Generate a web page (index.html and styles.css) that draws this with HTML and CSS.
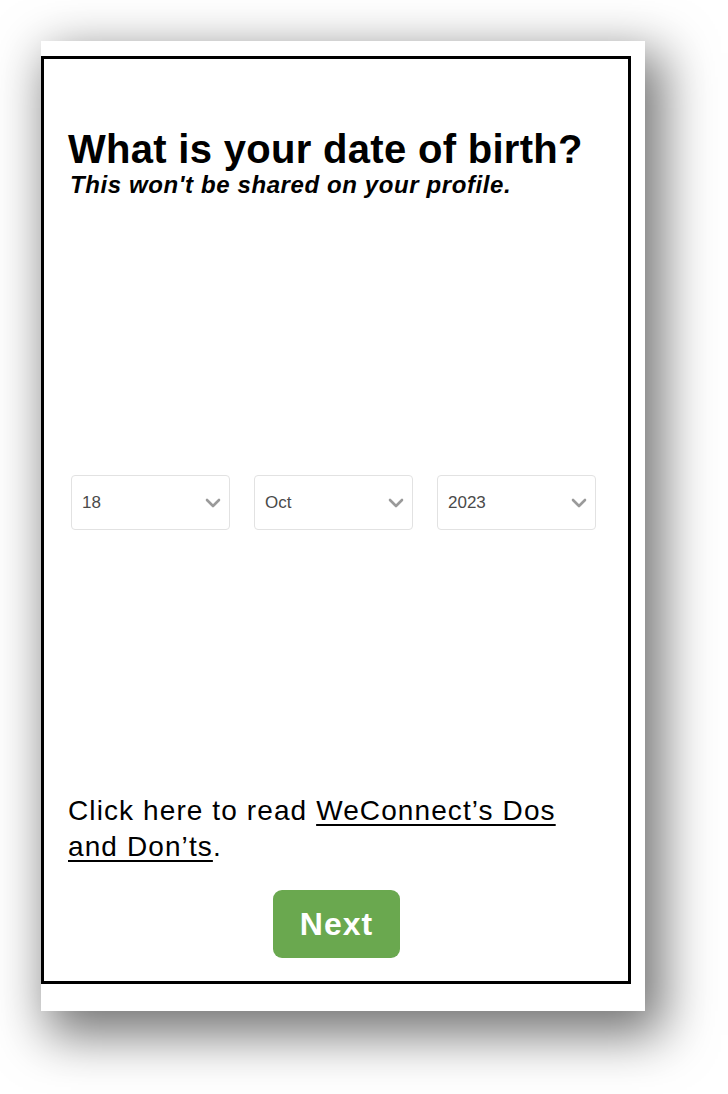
FILE: index.html
```html
<!DOCTYPE html>
<html lang="en">
<head>
<meta charset="utf-8">
<title>Date of birth</title>
<link rel="stylesheet" href="styles.css">
</head>
<body>
<div class="sheet">
  <div class="frame">
    <h1 class="title">What is your date of birth?</h1>
    <p class="subtitle">This won't be shared on your profile.</p>
    <div class="selects">
      <div class="select"><span class="value">18</span><svg class="chev" width="16" height="10" viewBox="0 0 16 10"><polyline points="2,2 8,8 14,2" fill="none" stroke="#9a9a9a" stroke-width="2.6" stroke-linecap="round" stroke-linejoin="round"/></svg></div>
      <div class="select"><span class="value">Oct</span><svg class="chev" width="16" height="10" viewBox="0 0 16 10"><polyline points="2,2 8,8 14,2" fill="none" stroke="#9a9a9a" stroke-width="2.6" stroke-linecap="round" stroke-linejoin="round"/></svg></div>
      <div class="select"><span class="value">2023</span><svg class="chev" width="16" height="10" viewBox="0 0 16 10"><polyline points="2,2 8,8 14,2" fill="none" stroke="#9a9a9a" stroke-width="2.6" stroke-linecap="round" stroke-linejoin="round"/></svg></div>
    </div>
    <p class="rules">Click here to read <a class="link" href="#">WeConnect’s Dos and Don’ts</a>.</p>
    <div class="actions"><button class="next" type="button">Next</button></div>
  </div>
</div>
</body>
</html>
```
FILE: styles.css
```css
html, body {
  margin: 0;
  padding: 0;
  background: #ffffff;
}
body {
  width: 728px;
  height: 1094px;
  overflow: hidden;
  font-family: "Liberation Sans", Arial, sans-serif;
  color: #000;
}
.sheet {
  margin: 41px 0 0 41px;
  width: 604px;
  height: 970px;
  background: #ffffff;
  padding-top: 15px;
  box-sizing: border-box;
  box-shadow: 12px 18px 48px 6px rgba(0, 0, 0, 0.55);
}
.frame {
  width: 590px;
  height: 928px;
  border: 3px solid #000;
  box-sizing: border-box;
  padding: 0 24px;
  display: flex;
  flex-direction: column;
}
.title {
  margin: 67px 0 0 0;
  font-size: 40px;
  line-height: 46px;
  font-weight: bold;
  letter-spacing: 0.3px;
}
.subtitle {
  margin: 0 0 0 2px;
  font-size: 24px;
  line-height: 26px;
  font-weight: bold;
  font-style: italic;
  letter-spacing: 0.6px;
}
.selects {
  margin: 277px 0 0 3px;
  display: flex;
  gap: 24px;
}
.select {
  width: 159px;
  height: 55px;
  box-sizing: border-box;
  border: 1.5px solid #e2e2e2;
  border-radius: 4px;
  display: flex;
  align-items: center;
  justify-content: space-between;
  padding: 0 8px 0 10px;
}
.value {
  font-size: 17px;
  color: #4a4a4a;
}
.chev {
  display: block;
}
.rules {
  margin: 263px 0 0 0;
  font-size: 28px;
  line-height: 36px;
  letter-spacing: 1.1px;
}
.link {
  color: #000;
  text-decoration: underline;
  text-decoration-thickness: 2px;
  text-underline-offset: 4px;
}
.actions {
  margin-top: 25px;
  display: flex;
  justify-content: center;
}
.next {
  width: 127px;
  height: 68px;
  background: #6aa84f;
  border: none;
  border-radius: 9px;
  color: #ffffff;
  font-family: "Liberation Sans", Arial, sans-serif;
  font-weight: bold;
  font-size: 32px;
  letter-spacing: 1px;
  padding: 0;
  margin-left: 1px;
}
```
